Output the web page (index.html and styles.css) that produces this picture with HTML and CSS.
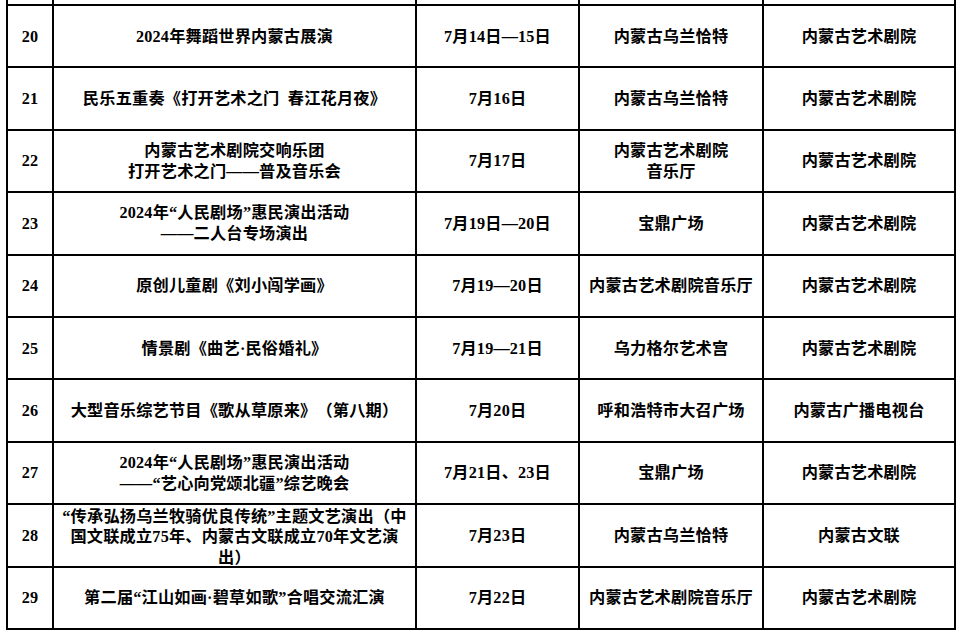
FILE: index.html
```html
<!DOCTYPE html>
<html lang="zh-CN">
<head>
<meta charset="utf-8">
<link rel="stylesheet" href="styles.css">
</head>
<body>
<table class="sched">
<colgroup>
<col class="c-no"><col class="c-name"><col class="c-date"><col class="c-venue"><col class="c-org">
</colgroup>
<tbody>
<tr class="stub"><td></td><td></td><td></td><td></td><td></td></tr>
<tr><td><div class="cell">20</div></td><td><div class="cell">2024年舞蹈世界内蒙古展演</div></td><td><div class="cell">7月14日—15日</div></td><td><div class="cell">内蒙古乌兰恰特</div></td><td><div class="cell">内蒙古艺术剧院</div></td></tr>
<tr><td><div class="cell">21</div></td><td><div class="cell">民乐五重奏《打开艺术之门&ensp;春江花月夜》</div></td><td><div class="cell">7月16日</div></td><td><div class="cell">内蒙古乌兰恰特</div></td><td><div class="cell">内蒙古艺术剧院</div></td></tr>
<tr><td><div class="cell">22</div></td><td><div class="cell">内蒙古艺术剧院交响乐团<br>打开艺术之门——普及音乐会</div></td><td><div class="cell">7月17日</div></td><td><div class="cell">内蒙古艺术剧院<br>音乐厅</div></td><td><div class="cell">内蒙古艺术剧院</div></td></tr>
<tr><td><div class="cell">23</div></td><td><div class="cell">2024年“人民剧场”惠民演出活动<br>——二人台专场演出</div></td><td><div class="cell">7月19日—20日</div></td><td><div class="cell">宝鼎广场</div></td><td><div class="cell">内蒙古艺术剧院</div></td></tr>
<tr><td><div class="cell">24</div></td><td><div class="cell">原创儿童剧《刘小闯学画》</div></td><td><div class="cell">7月19—20日</div></td><td><div class="cell">内蒙古艺术剧院音乐厅</div></td><td><div class="cell">内蒙古艺术剧院</div></td></tr>
<tr><td><div class="cell">25</div></td><td><div class="cell">情景剧《曲艺·民俗婚礼》</div></td><td><div class="cell">7月19—21日</div></td><td><div class="cell">乌力格尔艺术宫</div></td><td><div class="cell">内蒙古艺术剧院</div></td></tr>
<tr><td><div class="cell">26</div></td><td><div class="cell">大型音乐综艺节目《歌从草原来》（第八期）</div></td><td><div class="cell">7月20日</div></td><td><div class="cell">呼和浩特市大召广场</div></td><td><div class="cell">内蒙古广播电视台</div></td></tr>
<tr><td><div class="cell">27</div></td><td><div class="cell">2024年“人民剧场”惠民演出活动<br>——“艺心向党颂北疆”综艺晚会</div></td><td><div class="cell">7月21日、23日</div></td><td><div class="cell">宝鼎广场</div></td><td><div class="cell">内蒙古艺术剧院</div></td></tr>
<tr><td><div class="cell">28</div></td><td><div class="cell tight">“传承弘扬乌兰牧骑优良传统”主题文艺演出（中<br>国文联成立75年、内蒙古文联成立70年文艺演<br>出）</div></td><td><div class="cell">7月23日</div></td><td><div class="cell">内蒙古乌兰恰特</div></td><td><div class="cell">内蒙古文联</div></td></tr>
<tr><td><div class="cell">29</div></td><td><div class="cell">第二届“江山如画·碧草如歌”合唱交流汇演</div></td><td><div class="cell">7月22日</div></td><td><div class="cell">内蒙古艺术剧院音乐厅</div></td><td><div class="cell">内蒙古艺术剧院</div></td></tr>
</tbody>
</table>
</body>
</html>
```

FILE: styles.css
```css
html, body {
  margin: 0;
  padding: 0;
  background: #ffffff;
}

body {
  font-family: "Liberation Serif", "Noto Sans CJK SC", serif;
  font-weight: 700;
  font-size: 16.2px;
  color: #000000;
  text-spacing-trim: space-all;
}

.sched {
  margin-left: 6px;
  width: 948px;
  border-collapse: collapse;
  table-layout: fixed;
}

.c-no { width: 46px; }
.c-name { width: 363px; }
.c-date { width: 163px; }
.c-venue { width: 184px; }
.c-org { width: 192px; }

.sched td {
  border: 2px solid #000000;
  padding: 0;
  height: 60.4px;
  vertical-align: middle;
}

.sched tr.stub td {
  border-top: none;
  height: 4px;
}

.cell {
  height: 60px;
  display: flex;
  align-items: center;
  justify-content: center;
  text-align: center;
  line-height: 21px;
  letter-spacing: 0.2px;
  padding-top: 2px;
  box-sizing: border-box;
  text-spacing-trim: space-all;
}

.cell.tight {
  line-height: 20.5px;
  padding-top: 4px;
}
```
